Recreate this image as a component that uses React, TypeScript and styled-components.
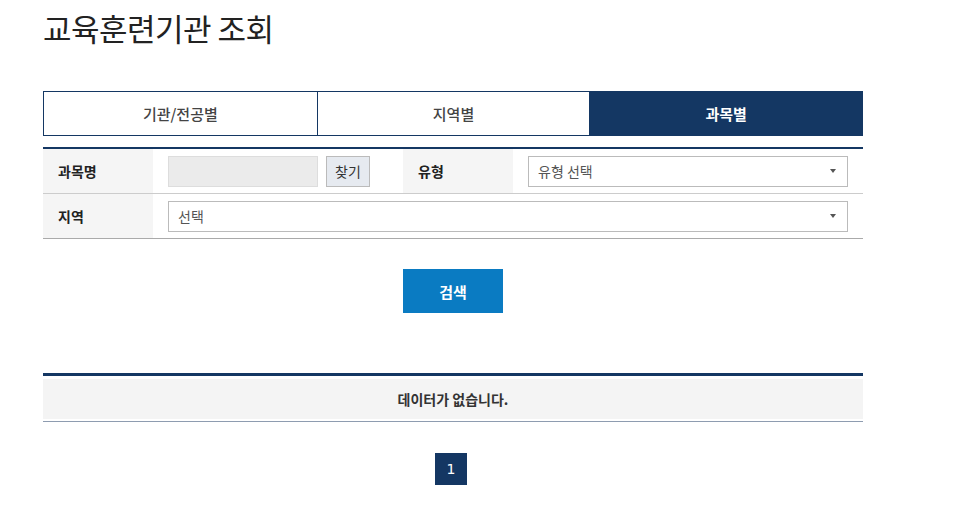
import React, { useState } from 'react';
import styled, { createGlobalStyle } from 'styled-components';

const NAVY = '#143763';

const GlobalStyle = createGlobalStyle`
  body {
    margin: 0;
    background: #fff;
    font-family: "Noto Sans CJK KR", "Noto Sans", sans-serif;
    color: #222;
  }
`;

const tabs = ['기관/전공별', '지역별', '과목별'];

const App = () => {
  const [activeTab, setActiveTab] = useState(2);

  return (
    <Page>
      <GlobalStyle />
      <Title>교육훈련기관 조회</Title>

      <TabBar>
        {tabs.map((label, i) => (
          <Tab key={label} active={i === activeTab} onClick={() => setActiveTab(i)}>
            {label}
          </Tab>
        ))}
      </TabBar>

      <SearchTable>
        <FormRow columns="110px 250px 110px 1fr">
          <Label>과목명</Label>
          <Cell>
            <TextInput disabled />
            <FindButton>찾기</FindButton>
          </Cell>
          <Label>유형</Label>
          <Cell>
            <Select>
              <span>유형 선택</span>
              <Caret />
            </Select>
          </Cell>
        </FormRow>
        <FormRow columns="110px 1fr" last>
          <Label>지역</Label>
          <Cell>
            <Select>
              <span>선택</span>
              <Caret />
            </Select>
          </Cell>
        </FormRow>
      </SearchTable>

      <ButtonRow>
        <SearchButton>검색</SearchButton>
      </ButtonRow>

      <Results>
        <EmptyRow>데이터가 없습니다.</EmptyRow>
      </Results>

      <Pagination>
        <PageButton active>1</PageButton>
      </Pagination>
    </Page>
  );
};

const Page = styled.div`
  width: 820px;
  padding: 6px 0 0 43px;
`;

const Title = styled.h1`
  margin: 0;
  font-size: 31px;
  line-height: 44px;
  font-weight: 400;
  color: #222;
  letter-spacing: -0.5px;
`;

const TabBar = styled.div`
  margin-top: 41px;
  display: grid;
  grid-template-columns: repeat(3, 1fr);
  border: 1px solid ${NAVY};
  height: 45px;
  box-sizing: border-box;
`;

const Tab = styled.button<{ active: boolean }>`
  border: none;
  border-left: 1px solid ${NAVY};
  &:first-child {
    border-left: none;
  }
  background: ${({ active }) => (active ? NAVY : '#fff')};
  color: ${({ active }) => (active ? '#fff' : '#444')};
  font-family: inherit;
  font-size: 15px;
  font-weight: ${({ active }) => (active ? 700 : 500)};
  cursor: pointer;
  padding: 0;
`;

const SearchTable = styled.div`
  margin-top: 11px;
  border-top: 2px solid ${NAVY};
  border-bottom: 1px solid #aaa;
`;

const FormRow = styled.div<{ columns: string; last?: boolean }>`
  display: grid;
  grid-template-columns: ${({ columns }) => columns};
  height: 44px;
  border-bottom: ${({ last }) => (last ? 'none' : '1px solid #ccc')};
`;

const Label = styled.div`
  display: flex;
  align-items: center;
  padding-left: 15px;
  background: #f5f5f5;
  font-size: 14px;
  font-weight: 700;
  color: #222;
`;

const Cell = styled.div`
  display: flex;
  align-items: center;
  gap: 8px;
  padding: 0 15px;
`;

const TextInput = styled.input`
  width: 150px;
  height: 31px;
  box-sizing: border-box;
  border: 1px solid #ddd;
  background: #ebebeb;
  margin: 0;
`;

const FindButton = styled.button`
  width: 44px;
  height: 31px;
  border: 1px solid #bbb;
  background: #e6eaf0;
  color: #333;
  font-family: inherit;
  font-size: 14px;
  padding: 0;
`;

const Select = styled.div`
  flex: 1;
  height: 31px;
  box-sizing: border-box;
  border: 1px solid #bbb;
  display: flex;
  align-items: center;
  justify-content: space-between;
  padding: 0 11px 0 9px;
  font-size: 14px;
  color: #555;
`;

const Caret = styled.span`
  width: 0;
  height: 0;
  border-left: 3px solid transparent;
  border-right: 3px solid transparent;
  border-top: 4px solid #555;
`;

const ButtonRow = styled.div`
  display: flex;
  justify-content: center;
  margin-top: 30px;
`;

const SearchButton = styled.button`
  width: 100px;
  height: 44px;
  border: none;
  background: #0a7bc2;
  color: #fff;
  font-family: inherit;
  font-size: 15px;
  font-weight: 700;
  cursor: pointer;
`;

const Results = styled.div`
  margin-top: 60px;
  border-top: 3px solid ${NAVY};
  border-bottom: 1px solid #8e9cb0;
  padding: 3px 0 2px;
`;

const EmptyRow = styled.div`
  height: 40px;
  background: #f4f4f4;
  display: flex;
  align-items: center;
  justify-content: center;
  font-size: 14px;
  font-weight: 700;
  color: #333;
`;

const Pagination = styled.div`
  display: flex;
  justify-content: center;
  margin-top: 31px;
  padding-right: 4px;
`;

const PageButton = styled.button<{ active?: boolean }>`
  width: 32px;
  height: 32px;
  border: none;
  padding: 0;
  background: ${({ active }) => (active ? NAVY : '#fff')};
  color: ${({ active }) => (active ? '#fff' : '#333')};
  font-family: "DejaVu Sans", sans-serif;
  font-size: 14px;
`;

export default App;
